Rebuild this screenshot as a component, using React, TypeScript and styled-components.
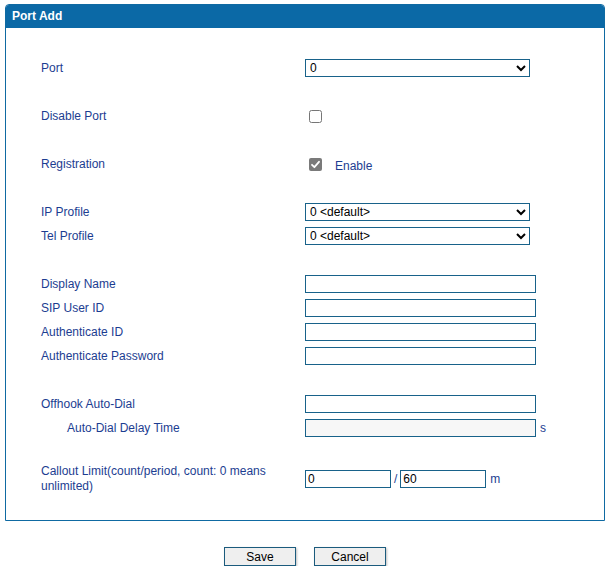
import React from "react";
import styled, { createGlobalStyle } from "styled-components";

const Global = createGlobalStyle`
  html, body { margin: 0; padding: 0; background: #ffffff; }
  body { font-family: "Liberation Sans", Arial, sans-serif; font-size: 12px; }
`;

const Page = styled.div`
  width: 616px;
  padding-top: 4px;
`;

const Panel = styled.div`
  margin-left: 5px;
  width: 600px;
  box-sizing: border-box;
  border: 1px solid #0f6aa2;
  border-radius: 4px 4px 0 0;
`;

const Header = styled.div`
  height: 23px;
  background: #0b69a6;
  color: #ffffff;
  font-weight: bold;
  font-size: 12px;
  line-height: 23px;
  padding-left: 6px;
  border-radius: 3px 3px 0 0;
`;

const Body = styled.div`
  padding: 28px 0 26px 35px;
  display: flex;
  flex-direction: column;
`;

const Row = styled.div<{ $spaced?: boolean; $tall?: boolean }>`
  display: flex;
  align-items: center;
  min-height: ${(p) => (p.$tall ? 28 : 24)}px;
  margin-top: ${(p) => (p.$spaced ? 24 : 0)}px;
`;

const Label = styled.div<{ $indent?: boolean }>`
  flex: none;
  width: ${(p) => (p.$indent ? 238 : 264)}px;
  padding-left: ${(p) => (p.$indent ? 26 : 0)}px;
  color: #1c3d91;
  font-size: 12px;
  line-height: 15px;
`;

const Control = styled.div`
  display: flex;
  align-items: center;
`;

const Select = styled.select`
  width: 225px;
  height: 18px;
  box-sizing: border-box;
  border: 1px solid #18628a;
  border-radius: 0;
  padding: 0;
  font-family: "Liberation Sans", Arial, sans-serif;
  font-size: 12px;
  color: #000;
  background: #fff;
  outline: none;
`;

const TextInput = styled.input<{ $w?: number }>`
  width: ${(p) => p.$w ?? 231}px;
  height: 18px;
  box-sizing: border-box;
  border: 1px solid #18628a;
  border-radius: 0;
  padding: 0 2px;
  margin: 0;
  font-family: "Liberation Sans", Arial, sans-serif;
  font-size: 12px;
  color: #000;
  background: #fff;
  outline: none;
  &:disabled {
    background-color: #f7f7f7;
    border-color: #18628a;
  }
`;

const Check = styled.input`
  width: 13px;
  height: 13px;
  margin: 0 0 0 4px;
`;

const CheckedBox = styled.span`
  position: relative;
  display: inline-block;
  width: 13px;
  height: 13px;
  margin-left: 4px;
`;

const HiddenCheck = styled.input`
  appearance: none;
  -webkit-appearance: none;
  display: block;
  width: 13px;
  height: 13px;
  margin: 0;
  border-radius: 2px;
  background: #7a7a7a;
`;

const CheckMark = styled.svg`
  position: absolute;
  left: 0;
  top: 0;
  width: 13px;
  height: 13px;
  pointer-events: none;
`;

const Note = styled.span<{ $gap?: number }>`
  color: #1c3d91;
  font-size: 12px;
  margin: 0 ${(p) => p.$gap ?? 0}px 0 ${(p) => p.$gap ?? 4}px;
`;

const EnableText = styled.span`
  color: #1c3d91;
  font-size: 12px;
  margin-left: 13px;
  position: relative;
  top: 2px;
`;

const Buttons = styled.div`
  margin: 26px 0 0 5px;
  width: 600px;
  display: flex;
  justify-content: center;
  gap: 18px;
`;

const Button = styled.button`
  width: 72px;
  height: 19px;
  box-sizing: border-box;
  border: 1px solid #1b5b7d;
  background: #efefef;
  box-shadow: 1px 1px 2px rgba(0, 0, 0, 0.25);
  padding: 0;
  font-family: "Liberation Sans", Arial, sans-serif;
  font-size: 12px;
  color: #000;
  cursor: pointer;
`;

export default function App() {
  return (
    <Page>
      <Global />
      <Panel>
        <Header>Port Add</Header>
        <Body>
          <Row>
            <Label>Port</Label>
            <Control>
              <Select defaultValue="0">
                <option value="0">0</option>
                <option value="1">1</option>
              </Select>
            </Control>
          </Row>
          <Row $spaced>
            <Label>Disable Port</Label>
            <Control>
              <Check type="checkbox" />
            </Control>
          </Row>
          <Row $spaced>
            <Label>Registration</Label>
            <Control>
              <CheckedBox>
                <HiddenCheck type="checkbox" defaultChecked disabled />
                <CheckMark viewBox="0 0 13 13">
                  <path
                    d="M3 6.8 L5.4 9.2 L10 3.8"
                    fill="none"
                    stroke="#ffffff"
                    strokeWidth="1.8"
                    strokeLinecap="round"
                    strokeLinejoin="round"
                  />
                </CheckMark>
              </CheckedBox>
              <EnableText>Enable</EnableText>
            </Control>
          </Row>
          <Row $spaced>
            <Label>IP Profile</Label>
            <Control>
              <Select defaultValue="0">
                <option value="0">0 &lt;default&gt;</option>
              </Select>
            </Control>
          </Row>
          <Row>
            <Label>Tel Profile</Label>
            <Control>
              <Select defaultValue="0">
                <option value="0">0 &lt;default&gt;</option>
              </Select>
            </Control>
          </Row>
          <Row $spaced>
            <Label>Display Name</Label>
            <Control>
              <TextInput type="text" />
            </Control>
          </Row>
          <Row>
            <Label>SIP User ID</Label>
            <Control>
              <TextInput type="text" />
            </Control>
          </Row>
          <Row>
            <Label>Authenticate ID</Label>
            <Control>
              <TextInput type="text" />
            </Control>
          </Row>
          <Row>
            <Label>Authenticate Password</Label>
            <Control>
              <TextInput type="password" />
            </Control>
          </Row>
          <Row $spaced>
            <Label>Offhook Auto-Dial</Label>
            <Control>
              <TextInput type="text" />
            </Control>
          </Row>
          <Row>
            <Label $indent>Auto-Dial Delay Time</Label>
            <Control>
              <TextInput type="text" disabled />
              <Note $gap={4}>s</Note>
            </Control>
          </Row>
          <Row $spaced $tall>
            <Label>Callout Limit(count/period, count: 0 means unlimited)</Label>
            <Control>
              <TextInput type="text" $w={86} defaultValue="0" />
              <Note $gap={3}>/</Note>
              <TextInput type="text" $w={86} defaultValue="60" />
              <Note $gap={4}>m</Note>
            </Control>
          </Row>
        </Body>
      </Panel>
      <Buttons>
        <Button type="button">Save</Button>
        <Button type="button">Cancel</Button>
      </Buttons>
    </Page>
  );
}
